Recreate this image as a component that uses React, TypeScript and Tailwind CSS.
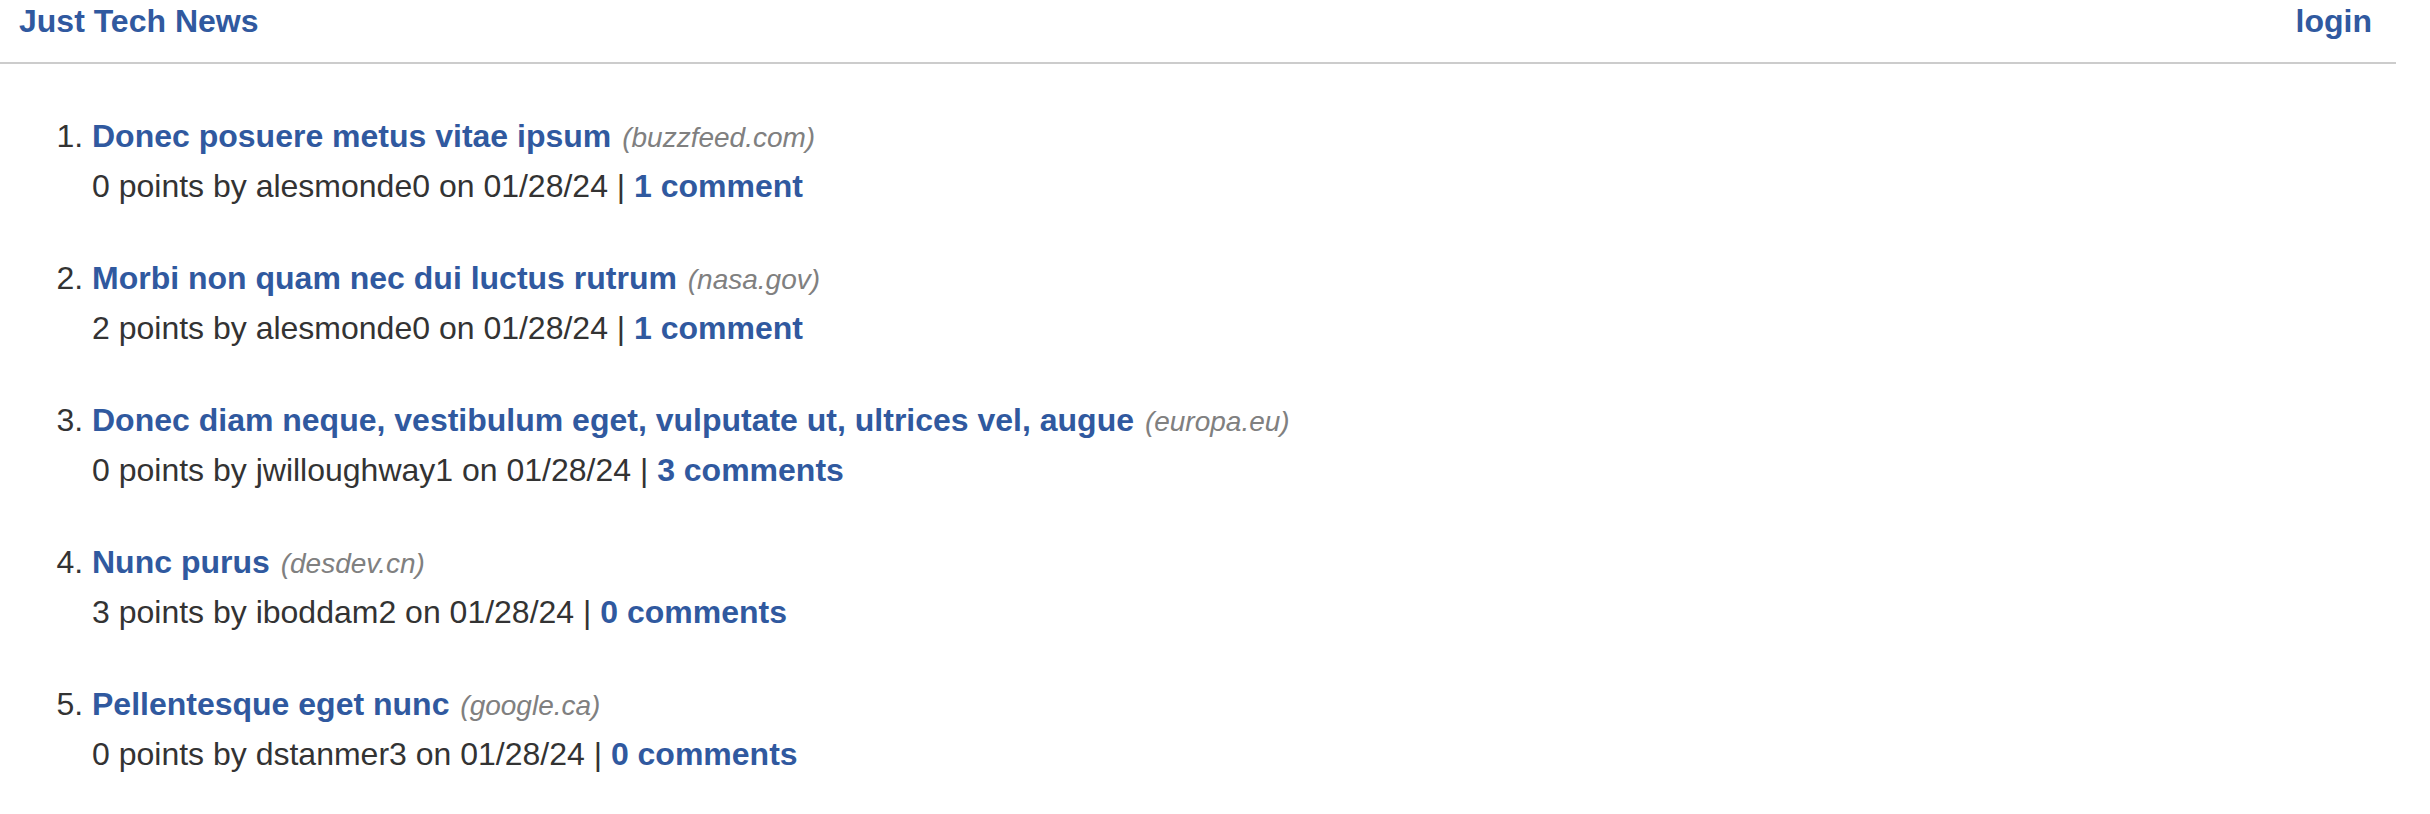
import React from "react";

type Item = {
  title: string;
  domain: string;
  points: number;
  user: string;
  date: string;
  comments: string;
};

const items: Item[] = [
  { title: "Donec posuere metus vitae ipsum", domain: "buzzfeed.com", points: 0, user: "alesmonde0", date: "01/28/24", comments: "1 comment" },
  { title: "Morbi non quam nec dui luctus rutrum", domain: "nasa.gov", points: 2, user: "alesmonde0", date: "01/28/24", comments: "1 comment" },
  { title: "Donec diam neque, vestibulum eget, vulputate ut, ultrices vel, augue", domain: "europa.eu", points: 0, user: "jwilloughway1", date: "01/28/24", comments: "3 comments" },
  { title: "Nunc purus", domain: "desdev.cn", points: 3, user: "iboddam2", date: "01/28/24", comments: "0 comments" },
  { title: "Pellentesque eget nunc", domain: "google.ca", points: 0, user: "dstanmer3", date: "01/28/24", comments: "0 comments" },
];

export default function App() {
  return (
    <div className="min-h-[814px] w-[2430px] bg-white text-[#333] font-['Liberation_Sans',Arial,sans-serif] text-[32px] leading-[37px]">
      <header className="w-[2396px] h-[64px] box-border border-b-2 border-[#cccccc] flex justify-between items-start pt-[3px] pl-[19px] pr-[24px]">
        <a className="font-bold text-[#30599f]">Just Tech News</a>
        <a className="font-bold text-[#30599f]">login</a>
      </header>
      <ol className="list-decimal list-outside pl-[92px] mt-[54px]">
        {items.map((it, i) => (
          <li key={i} className="mb-[55px]">
            <div>
              <a className="font-bold text-[#30599f]">{it.title}</a>{" "}
              <span className="italic text-[#808080] text-[28px] ml-[2px]">({it.domain})</span>
            </div>
            <div className="mt-[12px]">
              {it.points} points by {it.user} on {it.date} |{" "}
              <a className="font-bold text-[#30599f]">{it.comments}</a>
            </div>
          </li>
        ))}
      </ol>
    </div>
  );
}
